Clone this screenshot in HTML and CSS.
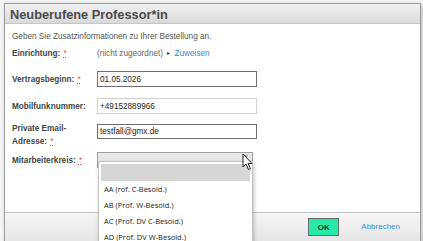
FILE: index.html
```html
<!DOCTYPE html>
<html lang="de">
  <head>
    <meta charset="UTF-8" />
    <title>Neuberufene Professor*in</title>
    <link rel="stylesheet" href="styles.css">
  </head>
  <body>
    <div class="dialog">
      <div class="titlebar">
        <h1>Neuberufene Professor*in</h1>
      </div>

      <div class="content">
        <p class="intro">Geben Sie Zusatzinformationen zu Ihrer Bestellung an.</p>

        <div class="row row-info">
          <label>Einrichtung: <span class="req">*</span></label>
          <div class="value">
            (nicht zugeordnet)
            <span class="arrow">&#9656;</span>
            <a href="#">Zuweisen</a>
          </div>
        </div>

        <div class="row">
          <label for="beginn">Vertragsbeginn: <span class="req">*</span></label>
          <input type="text" id="beginn" class="dark" value="01.05.2026" />
        </div>

        <div class="row">
          <label for="mobil">Mobilfunknummer:</label>
          <input type="text" id="mobil" class="light" value="+49152889966" />
        </div>

        <div class="row row-two">
          <label for="mail">Private Email-<br />Adresse: <span class="req">*</span></label>
          <input type="text" id="mail" class="dark" value="testfall@gmx.de" />
        </div>

        <div class="row row-select">
          <label>Mitarbeiterkreis: <span class="req">*</span></label>
          <div class="select-wrap">
            <div class="select">
              <span class="chev">&#8964;</span>
            </div>
            <ul class="dropdown">
              <li class="blank"></li>
              <li>AA (rof. C-Besold.)</li>
              <li>AB (Prof. W-Besold.)</li>
              <li>AC (Prof. DV C-Besold.)</li>
              <li>AD (Prof. DV W-Besold.)</li>
            </ul>
            <svg class="cursor" width="12" height="18" viewBox="0 0 12 18">
              <path d="M1 1 L1 14 L4 11 L6.5 16.5 L8.5 15.5 L6 10.5 L10 10.5 Z" fill="#fff" stroke="#222" stroke-width="1" stroke-linejoin="round" />
            </svg>
          </div>
        </div>
      </div>

      <div class="footer">
        <button class="ok">OK</button>
        <a href="#" class="cancel">Abbrechen</a>
      </div>
    </div>
  </body>
</html>
```

FILE: styles.css
```css
* {
  margin: 0;
  padding: 0;
  box-sizing: border-box;
}

body {
  background: #f4f4f4;
  font-family: "Liberation Sans", Arial, sans-serif;
  overflow: hidden;
}

.dialog {
  margin: 3px 2px 0 4px;
  width: 417px;
  height: 250px;
  border: 1px solid #9c9c9c;
  background: #fff;
  display: flex;
  flex-direction: column;
  box-shadow: 1px 1px 3px rgba(0, 0, 0, 0.25);
}

.titlebar {
  height: 20px;
  padding: 1px 0 0 5px;
  background: linear-gradient(#f1f1f1, #d9d9d9);
  border-bottom: 1px solid #c6c6c6;
  display: flex;
  align-items: center;
}
.titlebar h1 {
  font-size: 12.8px;
  font-weight: bold;
  color: #4a4a4a;
}

.content {
  height: 188px;
  padding: 6px 7px 0;
  color: #555;
  font-size: 8.2px;
}

.intro {
  line-height: 13px;
  margin-bottom: 4px;
}

.row {
  display: grid;
  grid-template-columns: 85px 160px;
  align-items: center;
}
.row label {
  font-weight: bold;
  color: #444;
  line-height: 13px;
}
.req {
  color: #e0504a;
  font-weight: normal;
  text-decoration: underline dotted;
  margin-left: 1px;
}

.row-info {
  height: 12px;
  margin-bottom: 12px;
}
.value {
  color: #666;
}
.arrow {
  color: #333;
  font-size: 6px;
  margin: 0 2px;
  vertical-align: 1px;
}
.value a {
  color: #2b8bd6;
  text-decoration: none;
}

input {
  font-family: "Liberation Sans", Arial, sans-serif;
  font-size: 8.2px;
  color: #222;
  height: 16px;
  padding: 0 2px;
  background: #fff;
}
input:focus {
  outline: none;
}
input.dark {
  border: 1px solid #707070;
}
input.light {
  border: 1px solid #d0d0d0;
}

.row + .row {
  margin-top: 11px;
}
.row-two {
  align-items: start;
  margin-top: 8px !important;
}
.row-two input {
  margin-top: 2px;
  height: 15px;
}
.row-select {
  margin-top: 4px !important;
}

.select-wrap {
  position: relative;
  width: 156px;
}
.select {
  height: 16px;
  border: 1px solid #a0a0a0;
  background: #e8e8e8;
  position: relative;
}
.chev {
  position: absolute;
  right: 2px;
  top: -4px;
  font-size: 9px;
  color: #555;
}

.dropdown {
  position: absolute;
  top: 9px;
  left: 1px;
  width: 155px;
  list-style: none;
  background: #fff;
  border: 1px solid #c4c4c4;
  box-shadow: 1px 2px 4px rgba(0, 0, 0, 0.25);
  padding: 2px 2px 0;
  z-index: 2;
}
.dropdown li {
  height: 16px;
  line-height: 16px;
  padding-left: 3px;
  font-family: "Open Sans", "Noto Sans", sans-serif;
  font-size: 7.5px;
  color: #222;
}
.dropdown li.blank {
  height: 17px;
  background: #d6d6d6;
}

.cursor {
  position: absolute;
  right: -1px;
  top: 1px;
  z-index: 3;
}

.footer {
  flex: 1;
  border-top: 1px solid #c4c4c4;
  background: linear-gradient(#f6f6f6, #dedede);
  display: flex;
  align-items: flex-start;
  justify-content: flex-end;
  padding: 5px 20px 0 0;
  gap: 22px;
}
.ok {
  width: 31px;
  height: 18px;
  border: 1px solid #6a6a6a;
  background: #27eaa8;
  font-family: "Liberation Sans", Arial, sans-serif;
  font-size: 8px;
  font-weight: bold;
  color: #1d3a2c;
}
.cancel {
  color: #3a8fd8;
  font-size: 8px;
  text-decoration: none;
  line-height: 18px;
}
```
